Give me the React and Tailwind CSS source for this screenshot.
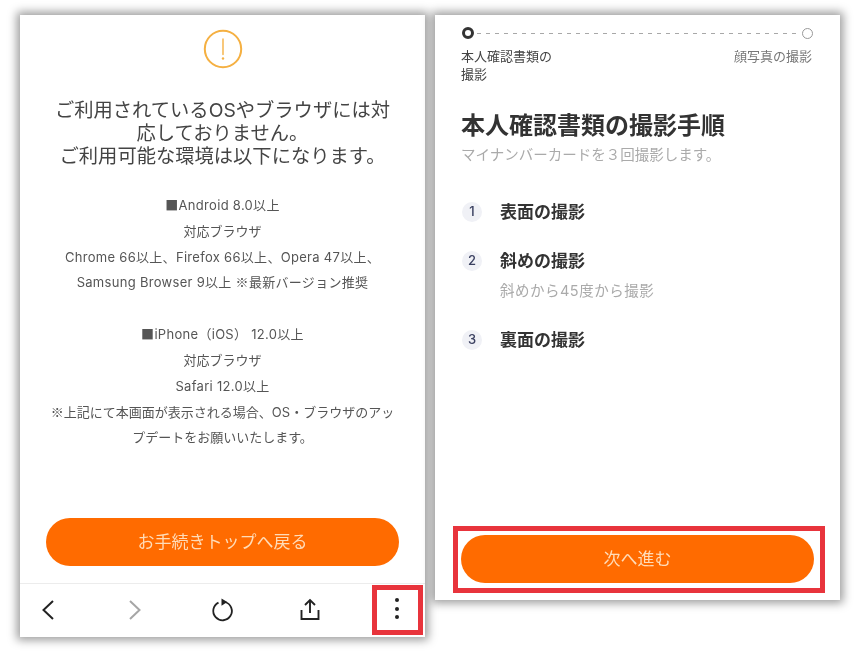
import React from 'react';

const jp = { fontFamily: 'Inter, "Noto Sans CJK JP", sans-serif' };

const Warning = () => (
  <svg width="40" height="40" viewBox="0 0 40 40" fill="none">
    <circle cx="20" cy="20" r="18.2" stroke="#f5b042" strokeWidth="2" />
    <path d="M20 10v15.5" stroke="#f5b042" strokeWidth="1.4" strokeLinecap="round" />
    <circle cx="20" cy="29.5" r="1.2" fill="#f5b042" />
  </svg>
);

const Toolbar = () => (
  <div className="h-[54px] border-t border-[#ececec] flex items-center pl-[13px] pb-[2px] text-[#222]">
    <div className="w-[30px] flex justify-center">
      <svg width="16" height="22" viewBox="0 0 16 22" fill="none" stroke="currentColor" strokeWidth="2">
        <path d="M13 2L3.5 11l9.5 9" />
      </svg>
    </div>
    <div className="w-[30px] ml-[57px] flex justify-center text-[#a6a6a6]">
      <svg width="16" height="22" viewBox="0 0 16 22" fill="none" stroke="currentColor" strokeWidth="2">
        <path d="M3 2l9.5 9L3 20" />
      </svg>
    </div>
    <div className="w-[30px] ml-[57px] flex justify-center">
      <svg width="24" height="26" viewBox="0 0 24 26" fill="none" stroke="currentColor" strokeWidth="1.8">
        <path d="M8.5 5.6A9.3 9.3 0 1 0 15 5" />
        <path d="M11.5 1.5L17.3 5l-5.8 3.8z" fill="currentColor" stroke="none" />
      </svg>
    </div>
    <div className="w-[30px] ml-[58px] flex justify-center">
      <svg width="22" height="24" viewBox="0 0 22 24" fill="none" stroke="currentColor" strokeWidth="1.9">
        <path d="M11 15V2" />
        <path d="M6 7l5-5 5 5" />
        <path d="M2.5 12v9h17v-9" />
      </svg>
    </div>
    <div className="w-[30px] ml-[57px] mb-[2px] flex flex-col items-center gap-[4.5px]">
      <span className="w-[4px] h-[4px] rounded-full bg-[#222]" />
      <span className="w-[4px] h-[4px] rounded-full bg-[#222]" />
      <span className="w-[4px] h-[4px] rounded-full bg-[#222]" />
    </div>
  </div>
);

// ■ and ※ come from the CJK font, Inter's are too small
const Mark = ({ children }) => <span className="font-['Noto_Sans_CJK_JP'] leading-none">{children}</span>;

const Latin = ({ children }) => <p className="h-[25.8px] whitespace-nowrap tracking-[0.3px]">{children}</p>;
const Plain = ({ children }) => <p className="h-[25.8px] whitespace-nowrap">{children}</p>;

const steps = [
  { no: 1, title: '表面の撮影' },
  { no: 2, title: '斜めの撮影', note: '斜めから45度から撮影' },
  { no: 3, title: '裏面の撮影' },
];

const App = () => {
  return (
    <div className="w-[858px] h-[657px] bg-white flex items-start gap-[10px] pl-[20px] pt-[15px] overflow-hidden blur-[0.3px]" style={jp}>
      {/* left phone screen */}
      <div className="relative w-[405px] h-[622px] bg-white flex flex-col shadow-[0_0_9px_3px_rgba(0,0,0,0.4)]">
        <div className="flex-1 flex flex-col items-center">
          <div className="mt-[14px]"><Warning /></div>
          <div className="mt-[30px] text-[19.3px] leading-[23px] text-[#444] text-center w-[345px]">
            <p>ご利用されているOSやブラウザには対応しておりません。</p>
            <p>ご利用可能な環境は以下になります。</p>
          </div>
          <div className="mt-[25px] text-[13px] leading-[25.8px] text-[#555] text-center w-[350px]">
            <Latin><Mark>■</Mark>Android 8.0以上</Latin>
            <Plain>対応ブラウザ</Plain>
            <Latin>Chrome 66以上、Firefox 66以上、Opera 47以上、</Latin>
            <Latin>Samsung Browser 9以上 <Mark>※</Mark>最新バージョン推奨</Latin>
            <div className="h-[26px]" />
            <Latin><Mark>■</Mark>iPhone（iOS） 12.0以上</Latin>
            <Plain>対応ブラウザ</Plain>
            <Latin>Safari 12.0以上</Latin>
            <Plain><Mark>※</Mark>上記にて本画面が表示される場合、OS・ブラウザのアッ</Plain>
            <Plain>プデートをお願いいたします。</Plain>
          </div>
          <button className="mt-auto mb-[17px] pt-[2px] w-[353px] h-[48px] rounded-full bg-[#ff6b00] text-[#ffdcb8] text-[17px]">
            お手続きトップへ戻る
          </button>
        </div>
        <Toolbar />
        <div className="absolute left-[352px] top-[570px] w-[51px] h-[50px] border-[5px] border-[#e8343c]" />
      </div>

      {/* right phone screen */}
      <div className="relative w-[405px] h-[585px] bg-white flex flex-col px-[26px] shadow-[0_0_9px_3px_rgba(0,0,0,0.4)]">
        <div className="mt-[12px] ml-px mr-[1px] flex items-center">
          <span className="w-[12px] h-[12px] rounded-full border-[3px] border-[#333] shrink-0" />
          <span className="flex-1 mx-[3px] h-px bg-[repeating-linear-gradient(90deg,#a8a8a8_0,#a8a8a8_4px,transparent_4px,transparent_9px)]" />
          <span className="w-[11px] h-[11px] rounded-full border border-[#999] shrink-0" />
        </div>
        <div className="mt-[8px] pr-[2px] flex justify-between text-[13px] leading-[18px]">
          <p className="w-[92px] text-[#444]">本人確認書類の撮影</p>
          <p className="text-[#777]">顔写真の撮影</p>
        </div>
        <h1 className="mt-[27px] text-[24px] leading-[32px] font-bold text-[#333] whitespace-nowrap">本人確認書類の撮影手順</h1>
        <p className="mt-[3px] text-[14.5px] leading-[20px] text-[#aaa]">マイナンバーカードを３回撮影します。</p>
        <div className="mt-[37px] flex flex-col gap-[29px]">
          {steps.map((s) => (
            <div key={s.no} className="flex items-start gap-[18px] pl-px">
              <span className="w-[20px] h-[20px] rounded-full bg-[#f0f1f6] text-[#3a4060] text-[13px] font-medium flex items-center justify-center">{s.no}</span>
              <div>
                <p className="text-[17px] leading-[20px] font-bold text-[#333]">{s.title}</p>
                {s.note && <p className="mt-[10px] text-[14.5px] tracking-[0.5px] leading-[20px] text-[#aaa]">{s.note}</p>}
              </div>
            </div>
          ))}
        </div>
        <button className="mt-auto mb-[17px] pt-[2px] w-[353px] h-[48px] rounded-full bg-[#ff6b00] text-[#ffdcb8] text-[17px]">
          次へ進む
        </button>
        <div className="absolute left-[18px] top-[511px] w-[372px] h-[67px] border-[5px] border-[#e8343c]" />
      </div>
    </div>
  );
};

export default App;
